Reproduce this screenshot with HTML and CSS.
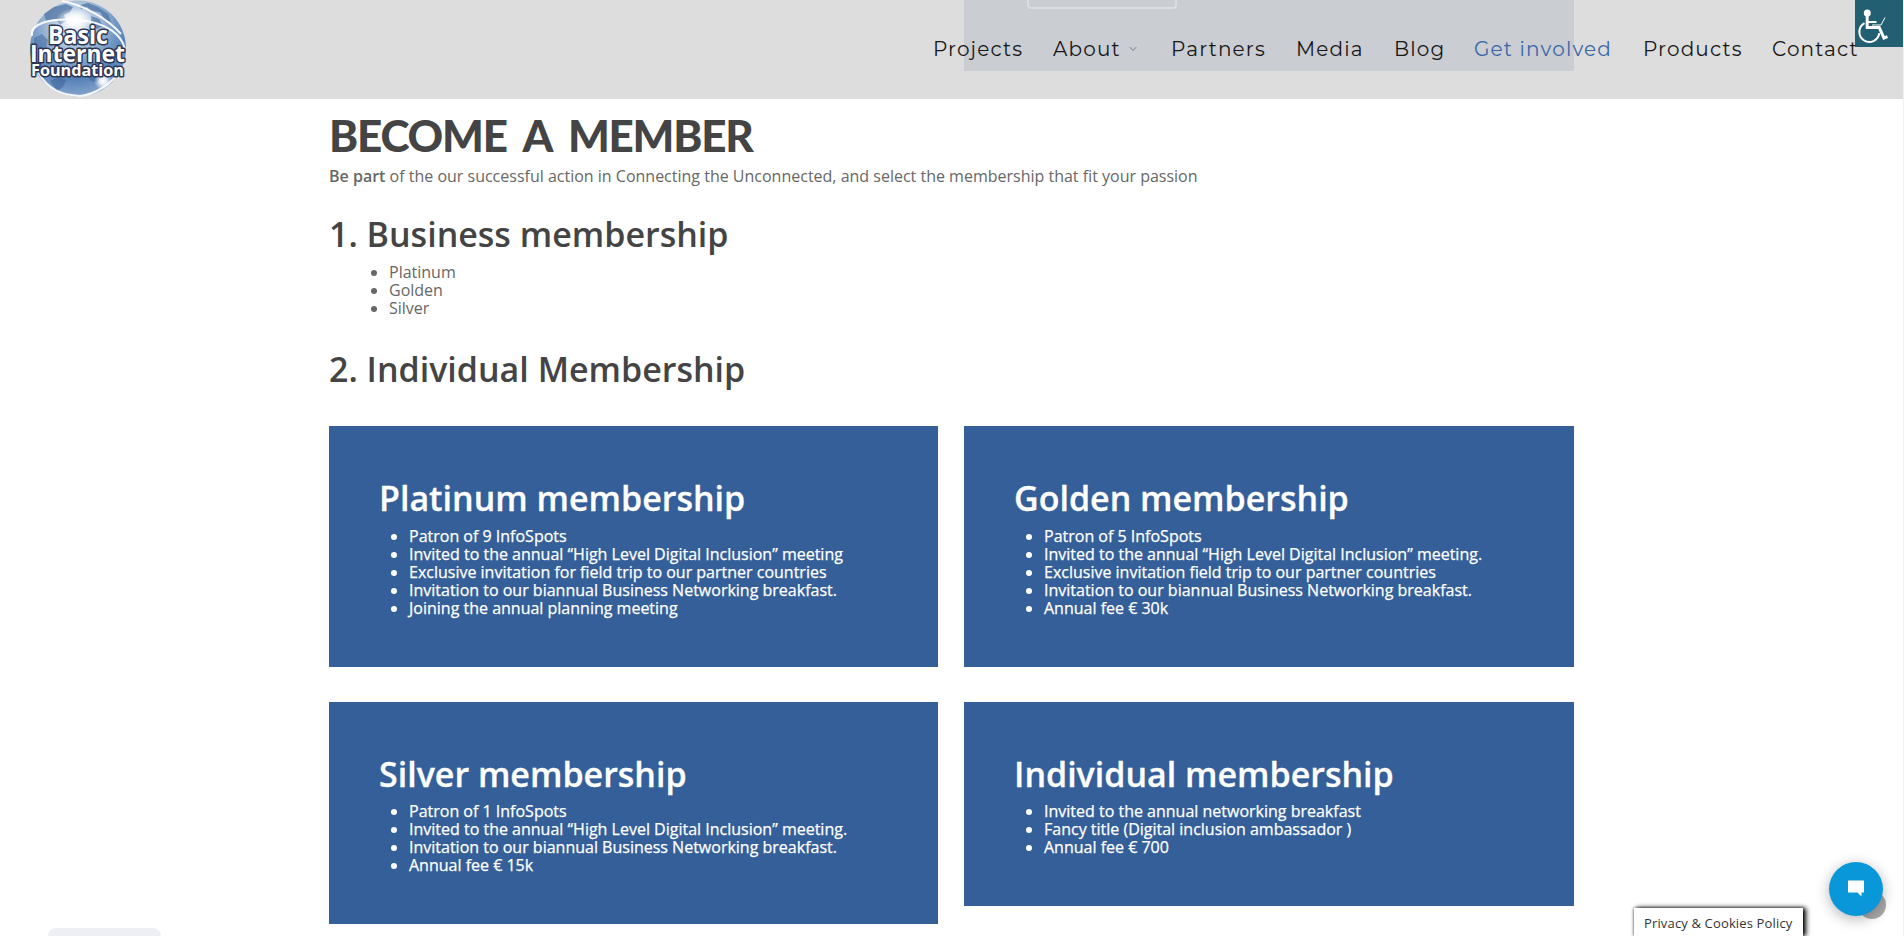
FILE: index.html
```html
<!DOCTYPE html>
<html lang="en">
<head>
	<meta charset="UTF-8">
	<title>Become a member</title>
	<link rel="stylesheet" href="styles.css">
</head>
<body>
	<header class="header">
		<div class="ghost-panel"><span class="ghost-button"></span></div>
		<a class="logo">
			<svg width="104" height="99" viewBox="26 0 104 99">
				<defs>
					<radialGradient id="globe" cx="45%" cy="25%" r="75%">
						<stop offset="0" stop-color="#eef4f9"/>
						<stop offset=".35" stop-color="#a3bcd9"/>
						<stop offset=".75" stop-color="#5480b8"/>
						<stop offset="1" stop-color="#86a5cc"/>
					</radialGradient>
					<radialGradient id="glow">
						<stop offset="0" stop-color="#fff"/>
						<stop offset=".4" stop-color="#fff" stop-opacity=".8"/>
						<stop offset="1" stop-color="#fff" stop-opacity="0"/>
					</radialGradient>
				</defs>
				<circle cx="78" cy="48.500" r="48" fill="url(#globe)"/>
				<path d="M44 14l10-7 12-3 7 3-3 5-6 3 2 6-6 4-4-6-10 2zM80 5l8-2 10 4 10 7 3 8-6-2-5-8-9-1-4-4-6 2zM91 16l8 3 4 7-6 3-6-5z" fill="#4a6f9f" opacity=".7"/>
				<path d="M34 38l8-4 6 6-2 8-12 2z" fill="#3f659b" opacity=".5"/>
				<path d="M50 81l9-4 7 3-3 7-6 4zM88 69l14 2-4 12-8-3z" fill="#3f659b" opacity=".6"/>
				<ellipse cx="75" cy="20" rx="19" ry="12" fill="url(#glow)"/>
				<path d="M32 36C30 24 48 18 78 20s44 16 47 29M62 1c22 4 46 18 59 33M38 72c10 18 24 23 42 24 18-2 32-14 42-26" fill="none" stroke="#fff" stroke-width="2" opacity=".9"/>
				<circle cx="103" cy="81" r="9" fill="url(#glow)"/>
				<g class="logo-text">
					<text x="48" y="43.500" font-size="25" textLength="60" lengthAdjust="spacingAndGlyphs">Basic</text>
					<text x="30" y="61.500" font-size="24" textLength="95" lengthAdjust="spacingAndGlyphs">Internet</text>
					<text x="31" y="75.500" font-size="16" textLength="93" lengthAdjust="spacingAndGlyphs">Foundation</text>
				</g>
			</svg>
		</a>
		<nav class="menu">
			<a class="projects">Projects</a>
			<a class="about">About<svg class="arrow" width="8" height="6" viewBox="0 0 8 6"><path d="M.7 1.200L4 4.500l3.300-3.300" fill="none" stroke="#999" stroke-width="1.200"/></svg></a>
			<a class="partners">Partners</a>
			<a class="media">Media</a>
			<a class="blog">Blog</a>
			<a class="involved on">Get involved</a>
			<a class="products">Products</a>
			<a class="contact">Contact</a>
		</nav>
		<a class="accessibility">
			<svg width="48" height="47" viewBox="0 0 48 47" fill="none" stroke="#fff">
				<circle cx="12.300" cy="13" r="3.500" fill="#fff" stroke="none"/>
				<path d="M12.200 16v11.500h12l4.800 10.500 3.500-1.300" stroke-width="3"/>
				<path d="M13 22h8.500" stroke-width="2"/>
				<path d="M17 25h9l4-7.500" stroke-width="1"/>
				<path d="M9.500 23.200a10 10 0 1 0 14.800 10" stroke-width="2"/>
			</svg>
		</a>
	</header>

	<main class="container">
		<h1>BECOME A MEMBER</h1>
		<p><strong>Be part</strong> of the our successful action in Connecting the Unconnected, and select the membership that fit your passion</p>
		<h2>1. Business membership</h2>
		<ul class="levels">
			<li>Platinum</li>
			<li>Golden</li>
			<li>Silver</li>
		</ul>
		<h2>2. Individual Membership</h2>

		<div class="cards">
			<div class="card">
				<h2>Platinum membership</h2>
				<ul>
					<li>Patron of 9 InfoSpots</li>
					<li>Invited to the annual “High Level Digital Inclusion” meeting</li>
					<li>Exclusive invitation for field trip to our partner countries</li>
					<li>Invitation to our biannual Business Networking breakfast.</li>
					<li>Joining the annual planning meeting</li>
				</ul>
			</div>
			<div class="card">
				<h2>Golden membership</h2>
				<ul>
					<li>Patron of 5 InfoSpots</li>
					<li>Invited to the annual “High Level Digital Inclusion” meeting.</li>
					<li>Exclusive invitation field trip to our partner countries</li>
					<li>Invitation to our biannual Business Networking breakfast.</li>
					<li>Annual fee € 30k</li>
				</ul>
			</div>
			<div class="card">
				<h2>Silver membership</h2>
				<ul>
					<li>Patron of 1 InfoSpots</li>
					<li>Invited to the annual “High Level Digital Inclusion” meeting.</li>
					<li>Invitation to our biannual Business Networking breakfast.</li>
					<li>Annual fee € 15k</li>
				</ul>
			</div>
			<div class="card">
				<h2>Individual membership</h2>
				<ul>
					<li>Invited to the annual networking breakfast</li>
					<li>Fancy title (Digital inclusion ambassador )</li>
					<li>Annual fee € 700</li>
				</ul>
			</div>
		</div>
	</main>

	<div class="bottom-tab"></div>
	<a class="privacy">Privacy &amp; Cookies Policy</a>
	<span class="to-top"></span>
	<a class="chat">
		<svg width="18" height="17" viewBox="0 0 18 17"><path d="M1 .5h16v12h-2.500v4l-4-4H1z" fill="#fff"/></svg>
	</a>
</body>
</html>
```

FILE: styles.css
```css
* { box-sizing: border-box; }

body {
	margin: 0;
	height: 936px;
	overflow: hidden;
	border-right: 1px solid #f1f1f1;
	background: #fff;
	font-family: "Open Sans", "Liberation Sans", sans-serif;
	font-size: 16px;
	line-height: 18px;
	color: #676767;
}

h1, h2, p, ul { margin: 0; padding: 0; }

/* header */
.header {
	position: relative;
	display: flex;
	justify-content: space-between;
	height: 99px;
	background: #ddd;
}
.ghost-panel {
	position: absolute;
	left: 964px;
	top: 0;
	width: 610px;
	height: 71px;
	background: #cacdd2;
}
.ghost-button {
	position: absolute;
	left: 63px;
	top: -30px;
	width: 150px;
	height: 39px;
	border: 2px solid #dcdddf;
	border-radius: 4px;
}
.logo { margin-left: 26px; height: 99px; }
.logo-text {
	font-family: "Open Sans", sans-serif;
	font-weight: 700;
	fill: #fff;
	stroke: #2c3552;
	stroke-width: 3px;
	stroke-linejoin: round;
	paint-order: stroke;
}

.menu {
	position: relative;
	display: flex;
	padding-top: 36px;
	font-family: Montserrat, Inter, sans-serif;
	font-size: 20px;
	line-height: 27px;
	letter-spacing: 1.15px;
	color: #171717;
	white-space: nowrap;
}
.projects { width: 120px; }
.about { width: 118px; }
.partners { width: 125px; }
.media { width: 98px; }
.blog { width: 80px; }
.involved { width: 169px; }
.products { width: 129px; }
.contact { width: 131px; }
.menu .on { color: #3b67a8; }
.arrow { margin-left: 8px; vertical-align: 4px; }

.accessibility {
	position: absolute;
	right: 0;
	top: 0;
	width: 48px;
	height: 47px;
	background: #235f72;
}

/* content */
.container { width: 1245px; margin: 14px auto 0; }

h1 {
	font-family: Lato, sans-serif;
	font-size: 44px;
	line-height: 44px;
	font-weight: 900;
	letter-spacing: -1.2px;
	word-spacing: 8px;
	color: #444;
	margin-bottom: 10px;
}
h2 {
	font-size: 34px;
	line-height: 45px;
	font-weight: 600;
	color: #444;
	margin-bottom: 5.5px;
}
p { margin-bottom: 27px; }
strong { font-weight: 600; }
.levels { margin: 0 0 30px 60px; }

.cards {
	display: grid;
	grid-template-columns: 609px 610px;
	gap: 35px 26px;
	align-items: start;
	margin-top: 34.8px;
}
.card { padding: 50px; background: #355f99; color: #fff; }
.card h2 { color: #fff; line-height: 44px; margin-bottom: 6.5px; -webkit-text-stroke: .3px #fff; }
.card ul { margin-left: 30px; -webkit-text-stroke: .25px #fff; }

/* floating things */
.bottom-tab {
	position: absolute;
	left: 48px;
	top: 928px;
	width: 113px;
	height: 8px;
	border-radius: 8px 8px 0 0;
	background: #eeeff5;
}
.privacy {
	position: absolute;
	left: 1634px;
	top: 908px;
	width: 169px;
	height: 28px;
	padding: 6px 0 0 10px;
	background: #fff;
	color: #333;
	font-size: 13px;
	letter-spacing: .15px;
	white-space: nowrap;
	box-shadow: 3px 0 5px #000, 0 0 3px #555;
}
.to-top {
	position: absolute;
	left: 1858px;
	top: 891px;
	width: 28px;
	height: 28px;
	border-radius: 50%;
	background: #aaa;
}
.chat {
	position: absolute;
	left: 1829px;
	top: 862px;
	width: 54px;
	height: 54px;
	padding: 18px;
	border-radius: 50%;
	background: #0a97d9;
	box-shadow: 0 3px 14px rgba(0,0,0,.3);
}
.chat svg { display: block; }
```
